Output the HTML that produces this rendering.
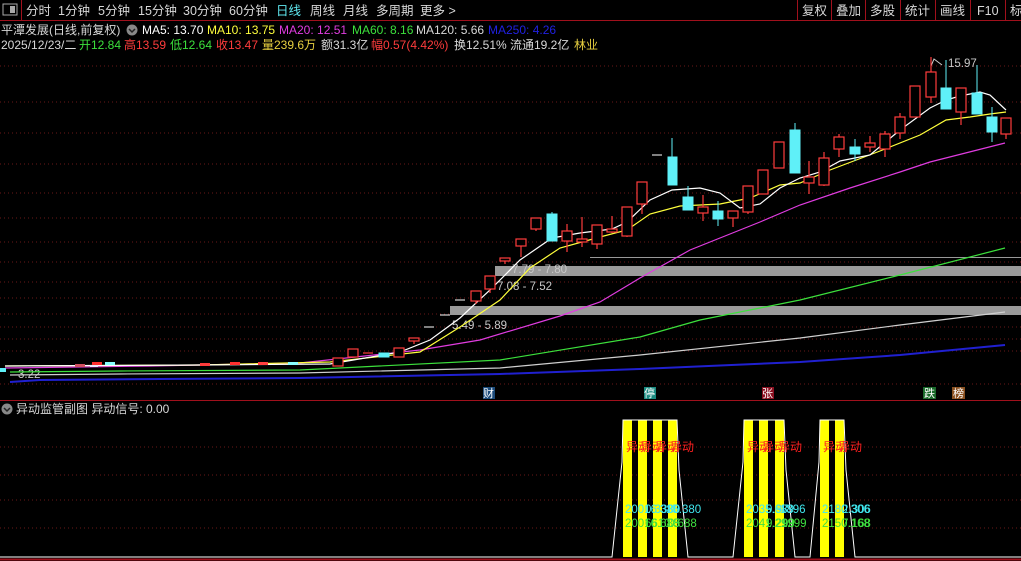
<!DOCTYPE html>
<html><head><meta charset="utf-8"><style>
body{margin:0;background:#000;width:1021px;height:561px;overflow:hidden;font-family:"Liberation Sans","Noto Sans CJK SC",sans-serif;}
svg{position:absolute;left:0;top:0}
text{font-family:"Liberation Sans","Noto Sans CJK SC",sans-serif}
</style></head><body>
<svg width="1021" height="561" xmlns="http://www.w3.org/2000/svg">
<rect width="1021" height="561" fill="#000"/>
<!-- top bar -->
<line x1="0" y1="20.5" x2="1021" y2="20.5" stroke="#a0101c"/>
<rect x="3" y="4" width="14" height="11" fill="none" stroke="#aaa"/><rect x="10" y="6" width="5" height="7" fill="#aaa"/>
<line x1="21.5" y1="0" x2="21.5" y2="20" stroke="#a0101c"/>
<g font-size="12.5" fill="#d8d8d8">
<text x="26" y="15">分时</text><text x="58" y="15">1分钟</text><text x="98" y="15">5分钟</text><text x="138" y="15">15分钟</text><text x="183" y="15">30分钟</text><text x="229" y="15">60分钟</text>
<text x="276" y="15" fill="#5fe8f0">日线</text><text x="310" y="15">周线</text><text x="343" y="15">月线</text><text x="376" y="15">多周期</text><text x="420" y="15">更多 &gt;</text>
<text x="802" y="15">复权</text><text x="836" y="15">叠加</text><text x="870" y="15">多股</text><text x="905" y="15">统计</text><text x="940" y="15">画线</text><text x="977" y="15">F10</text><text x="1010" y="15">标</text>
</g>
<g stroke="#a0101c"><line x1="797.5" y1="0" x2="797.5" y2="20"/><line x1="831.5" y1="0" x2="831.5" y2="20"/><line x1="865.5" y1="0" x2="865.5" y2="20"/><line x1="900.5" y1="0" x2="900.5" y2="20"/><line x1="935.5" y1="0" x2="935.5" y2="20"/><line x1="970.5" y1="0" x2="970.5" y2="20"/><line x1="1005.5" y1="0" x2="1005.5" y2="20"/></g>
<!-- legend -->
<g font-size="12">
<text x="1" y="34" fill="#d8d8d8">平潭发展(日线,前复权)</text>
<circle cx="132" cy="30" r="5.5" fill="#888"/><path d="M129 29l3 3 3-3" stroke="#222" fill="none" stroke-width="1.5"/>
<text x="142" y="34" fill="#fff">MA5: 13.70</text><text x="207" y="34" fill="#ffff3c">MA10: 13.75</text><text x="279" y="34" fill="#e03ce0">MA20: 12.51</text><text x="352" y="34" fill="#3ce03c">MA60: 8.16</text><text x="416" y="34" fill="#d8d8d8">MA120: 5.66</text><text x="488" y="34" fill="#2020e0">MA250: 4.26</text>
<text x="1" y="49" fill="#d8d8d8">2025/12/23/二</text><text x="79" y="49" fill="#3ce03c">开12.84</text><text x="124" y="49" fill="#ff3c3c">高13.59</text><text x="170" y="49" fill="#3ce03c">低12.64</text><text x="216" y="49" fill="#ff3c3c">收13.47</text><text x="262" y="49" fill="#e8d040">量239.6万</text><text x="321" y="49" fill="#d8d8d8">额31.3亿</text><text x="371" y="49" fill="#ff3c3c">幅0.57(4.42%)</text><text x="454" y="49" fill="#d8d8d8">换12.51%</text><text x="510" y="49" fill="#d8d8d8">流通19.2亿</text><text x="574" y="49" fill="#e8d040">林业</text>
</g>
<!-- grid -->
<g stroke="#6a1818" stroke-dasharray="1 3">
<line x1="0" x2="1021" y1="66" y2="66"/><line x1="0" x2="1021" y1="102" y2="102"/><line x1="0" x2="1021" y1="133" y2="133"/><line x1="0" x2="1021" y1="164" y2="164"/><line x1="0" x2="1021" y1="193" y2="193"/><line x1="0" x2="1021" y1="218" y2="218"/><line x1="0" x2="1021" y1="242" y2="242"/><line x1="0" x2="1021" y1="262" y2="262"/><line x1="0" x2="1021" y1="282" y2="282"/><line x1="0" x2="1021" y1="298" y2="298"/><line x1="0" x2="1021" y1="314" y2="314"/><line x1="0" x2="1021" y1="327" y2="327"/><line x1="0" x2="1021" y1="339" y2="339"/><line x1="0" x2="1021" y1="351" y2="351"/><line x1="0" x2="1021" y1="384" y2="384"/>
<line x1="0" x2="1021" y1="447" y2="447"/><line x1="0" x2="1021" y1="475" y2="475"/><line x1="0" x2="1021" y1="500" y2="500"/><line x1="0" x2="1021" y1="528" y2="528"/>
</g>
<!-- bands -->
<line x1="590" y1="257.5" x2="1021" y2="257.5" stroke="#999"/>
<rect x="495" y="266" width="526" height="10" fill="#9a9a9a"/>
<rect x="450" y="306" width="571" height="9" fill="#9a9a9a"/>
<g font-size="11.5" fill="#c8c8c8"><text x="512" y="273">7.79 - 7.80</text><text x="497" y="290">7.08 - 7.52</text><text x="452" y="329">5.49 - 5.89</text><text x="948" y="67">15.97</text><text x="18" y="378">3.22</text></g>
<path d="M931 66l3-7 8 6" stroke="#ccc" fill="none"/>
<!-- MAs -->
<g fill="none" stroke-width="1.2">
<polyline stroke="#2020d0" stroke-width="2" points="10,382 40,380 160,379 300,378 500,374 640,369 800,362 900,355 1005,345"/>
<polyline stroke="#cfcfcf" points="10,375 120,374 300,373 500,368 640,355 800,338 900,325 1005,312"/>
<polyline stroke="#3ce03c" points="10,372 120,371 300,370 500,360 640,337 700,320 800,300 900,275 1005,248"/>
<polyline stroke="#e03ce0" points="5,368 150,366 300,363 420,350 480,340 560,316 600,302 640,278 690,250 760,222 800,205 850,188 900,172 930,162 1005,143"/>
<polyline stroke="#ffff3c" points="5,366 200,365 330,362 420,352 460,327 500,300 530,268 560,248 600,237 627,230 650,214 680,206 720,204 750,198 780,185 800,183 830,170 880,151 920,135 946,120 970,117 990,114 1006,112"/>
<polyline stroke="#ffffff" points="5,366 200,365 330,364 400,352 430,340 460,318 490,290 520,260 552,238 580,233 612,229 627,222 650,200 672,190 700,188 720,193 740,208 760,204 780,188 800,178 820,172 840,161 870,155 900,130 930,108 946,100 960,96 980,92 990,95 1006,110"/>
</g>
<!-- candles -->
<g stroke="#ff3c3c" fill="none" stroke-width="1.2">
<line x1="627" y1="207" x2="627" y2="237"/><rect x="622" y="207" width="10" height="29" fill="#000"/>
<line x1="642" y1="182" x2="642" y2="214"/><rect x="637" y="182" width="10" height="22" fill="#000"/>
<line x1="703" y1="195" x2="703" y2="221"/><rect x="698" y="207" width="10" height="6" fill="#000"/>
<line x1="733" y1="211" x2="733" y2="227"/><rect x="728" y="211" width="10" height="7" fill="#000"/>
<line x1="748" y1="186" x2="748" y2="214"/><rect x="743" y="186" width="10" height="26" fill="#000"/>
<rect x="758" y="170" width="10" height="24" fill="#000"/>
<rect x="774" y="142" width="10" height="26" fill="#000"/>
<line x1="809" y1="161" x2="809" y2="194"/><rect x="804" y="177" width="10" height="6" fill="#000"/>
<line x1="824" y1="152" x2="824" y2="186"/><rect x="819" y="158" width="10" height="27" fill="#000"/>
<line x1="839" y1="134" x2="839" y2="157"/><rect x="834" y="137" width="10" height="12" fill="#000"/>
<line x1="870" y1="136" x2="870" y2="152"/><rect x="865" y="143" width="10" height="4" fill="#000"/>
<line x1="885" y1="131" x2="885" y2="157"/><rect x="880" y="134" width="10" height="15" fill="#000"/>
<line x1="900" y1="113" x2="900" y2="139"/><rect x="895" y="117" width="10" height="16" fill="#000"/>
<rect x="910" y="86" width="10" height="31" fill="#000"/>
<line x1="931" y1="57" x2="931" y2="103"/><rect x="926" y="72" width="10" height="25" fill="#000"/>
<line x1="961" y1="88" x2="961" y2="125"/><rect x="956" y="88" width="10" height="24" fill="#000"/>
<line x1="1006" y1="118" x2="1006" y2="139"/><rect x="1001" y="118" width="10" height="16" fill="#000"/>
<line x1="567" y1="224" x2="567" y2="252"/><rect x="562" y="231" width="10" height="10" fill="#000"/>
<line x1="582" y1="217" x2="582" y2="247"/><rect x="577" y="239" width="10" height="3" fill="#000"/>
<line x1="597" y1="225" x2="597" y2="249"/><rect x="592" y="225" width="10" height="19" fill="#000"/>
<line x1="612" y1="216" x2="612" y2="233"/><rect x="607" y="229" width="10" height="3" fill="#000"/>
<line x1="536" y1="218" x2="536" y2="231"/><rect x="531" y="218" width="10" height="11" fill="#000"/>
<line x1="521" y1="239" x2="521" y2="257"/><rect x="516" y="239" width="10" height="7" fill="#000"/>
<line x1="505" y1="258" x2="505" y2="264"/><rect x="500" y="258" width="10" height="3" fill="#000"/>
<line x1="490" y1="276" x2="490" y2="293"/><rect x="485" y="276" width="10" height="13" fill="#000"/>
<line x1="476" y1="291" x2="476" y2="304"/><rect x="471" y="291" width="10" height="10" fill="#000"/>
<line x1="414" y1="338" x2="414" y2="344"/><rect x="409" y="338" width="10" height="3" fill="#000"/>
<rect x="394" y="348" width="10" height="9" fill="#000"/>
<rect x="348" y="349" width="10" height="8" fill="#000"/>
<rect x="333" y="358" width="10" height="8" fill="#000"/>
<line x1="363" y1="353" x2="373" y2="353"/>
</g>
<g fill="#5ff0f8" stroke="#5ff0f8">
<line x1="672" y1="138" x2="672" y2="157"/><rect x="668" y="157" width="9" height="28"/>
<line x1="688" y1="186" x2="688" y2="197"/><rect x="683" y="197" width="10" height="13"/>
<line x1="718" y1="201" x2="718" y2="226"/><rect x="713" y="211" width="10" height="8"/>
<line x1="795" y1="123" x2="795" y2="130"/><rect x="790" y="130" width="10" height="43"/>
<line x1="855" y1="139" x2="855" y2="161"/><rect x="850" y="147" width="10" height="7"/>
<line x1="946" y1="60" x2="946" y2="88"/><rect x="941" y="88" width="10" height="21"/>
<line x1="977" y1="65" x2="977" y2="93"/><rect x="972" y="93" width="10" height="21"/>
<line x1="992" y1="107" x2="992" y2="142"/><rect x="987" y="117" width="10" height="15"/>
<line x1="552" y1="212" x2="552" y2="214"/><rect x="547" y="214" width="10" height="27"/>
<rect x="379" y="353" width="10" height="4"/>
</g>
<g stroke="#fff"><line x1="652" y1="155" x2="662" y2="155"/><line x1="424" y1="327" x2="434" y2="327"/><line x1="440" y1="315" x2="450" y2="315"/><line x1="455" y1="300" x2="465" y2="300"/></g>
<g>
<rect x="90" y="365" width="8" height="2" fill="#e8e8ff"/><rect x="75" y="364" width="10" height="3" fill="#d05060"/><rect x="92" y="362" width="10" height="3" fill="#ff3030"/><rect x="105" y="362" width="10" height="3" fill="#8ff"/><rect x="200" y="363" width="10" height="3" fill="#ff3c3c"/><rect x="230" y="362" width="10" height="3" fill="#ff3030"/><rect x="258" y="362" width="10" height="3" fill="#ff4040"/><rect x="288" y="362" width="10" height="3" fill="#8ff"/><rect x="0" y="368" width="6" height="4" fill="#5ff0f8"/>
</g>
<!-- badges -->
<line x1="0" y1="400.5" x2="1021" y2="400.5" stroke="#a0101c"/>
<g font-size="11" fill="#fff">
<rect x="483" y="387" width="12" height="12" fill="#1b4a7a"/><text x="483" y="397">财</text>
<rect x="644" y="387" width="12" height="12" fill="#1a8a80"/><text x="644" y="397">停</text>
<rect x="762" y="387" width="12" height="12" fill="#8a1020"/><text x="762" y="397">张</text>
<rect x="923" y="387" width="13" height="12" fill="#1a6a2a"/><text x="924" y="397">跌</text>
<rect x="952" y="387" width="13" height="12" fill="#8a5020"/><text x="953" y="397">榜</text>
</g>
<!-- sub chart -->
<circle cx="7" cy="409" r="5.5" fill="#888"/><path d="M4 408l3 3 3-3" stroke="#222" fill="none" stroke-width="1.5"/>
<text x="16" y="413" font-size="12" fill="#d8d8d8">异动监管副图  异动信号: 0.00</text>
<g fill="#ffff00">
<rect x="623" y="420" width="9" height="137"/><rect x="638" y="420" width="9" height="137"/><rect x="653" y="420" width="9" height="137"/><rect x="668" y="420" width="9" height="137"/>
<rect x="744" y="420" width="9" height="137"/><rect x="759" y="420" width="9" height="137"/><rect x="775" y="420" width="9" height="137"/>
<rect x="820" y="420" width="9" height="137"/><rect x="835" y="420" width="9" height="137"/>
</g>
<polyline fill="none" stroke="#fff" points="0,557 612,557 622,462 623,420 677,420 679,470 688,557 733,557 743,462 744,420 784,420 786,470 795,557 810,557 819,462 820,420 844,420 846,470 855,557 1021,557"/>
<g font-size="12" fill="#ff2020"><text x="626" y="451">异动</text><text x="640" y="451">异动</text><text x="655" y="451">异动</text><text x="670" y="451">异动</text>
<text x="747" y="451">异动</text><text x="762" y="451">异动</text><text x="778" y="451">异动</text><text x="823" y="451">异动</text><text x="838" y="451">异动</text></g>
<g font-size="11.5" fill="#40e8f0"><text x="625" y="513">20016.380</text><text x="645" y="513">0.3380</text><text x="666" y="513">15.380</text>
<text x="746" y="513">2035.689</text><text x="766" y="513">9.97</text><text x="780" y="513">1896</text><text x="822" y="513">2180.306</text><text x="842" y="513">2.306</text></g>
<g font-size="11.5" fill="#40e040"><text x="625" y="527">20016.688</text><text x="645" y="527">6610.5</text><text x="668" y="527">0.688</text>
<text x="746" y="527">2041.299</text><text x="766" y="527">9.299</text><text x="781" y="527">1299</text><text x="822" y="527">2150.168</text><text x="842" y="527">7.168</text></g>
<line x1="0" y1="559.5" x2="1021" y2="559.5" stroke="#a0101c" stroke-width="2"/>
</svg>
</body></html>
